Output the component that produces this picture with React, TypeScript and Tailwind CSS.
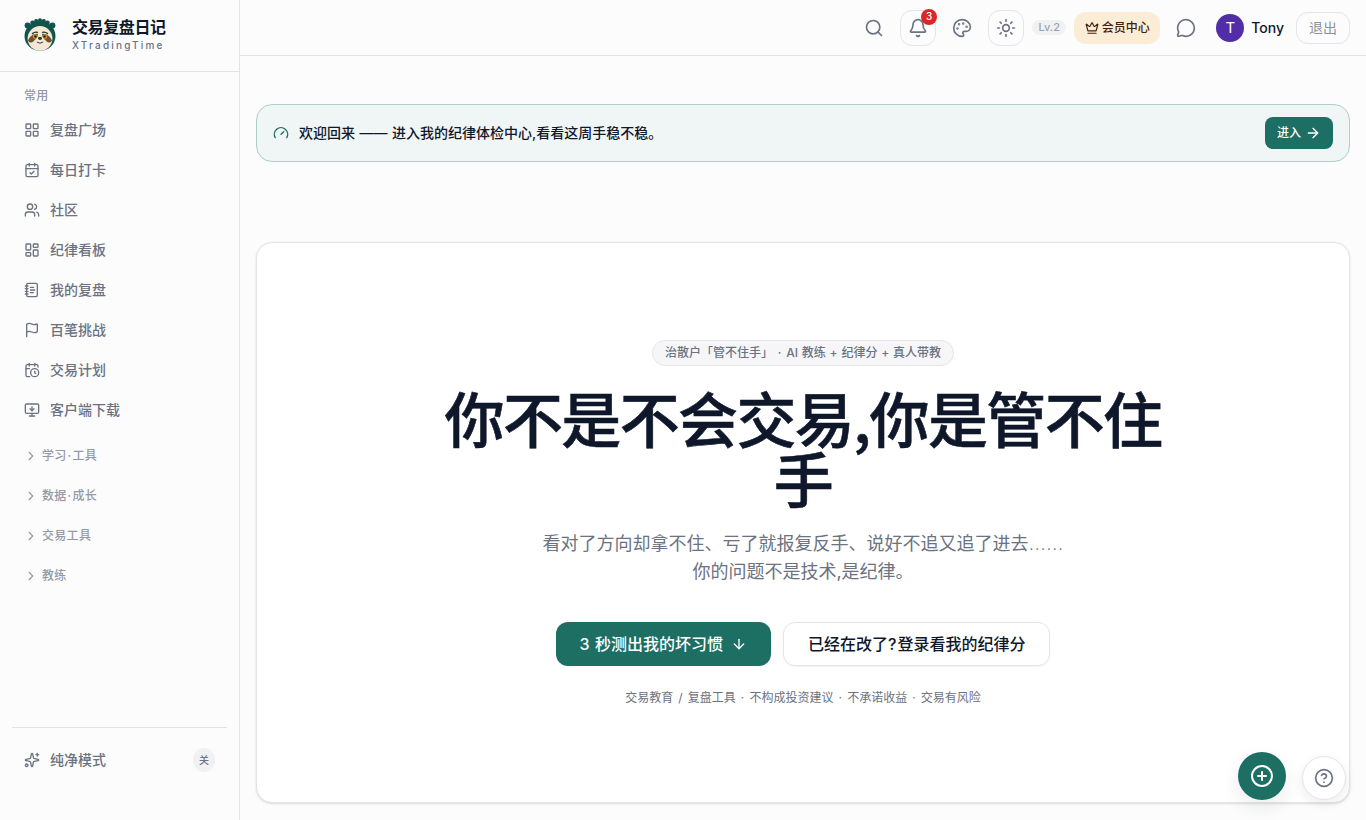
import React from "react";
import {
  ArrowDown, ArrowRight, Bell, CalendarCheck, CalendarClock, ChevronRight, CircleHelp, CirclePlus, Crown, Flag,
  Gauge, LayoutDashboard, LayoutGrid, MessageCircle, MonitorDown, NotebookText, Palette, Search, Sparkles, Sun, Users,
} from "lucide-react";

const nav = [
  { label: "复盘广场", Icon: LayoutGrid },
  { label: "每日打卡", Icon: CalendarCheck },
  { label: "社区", Icon: Users },
  { label: "纪律看板", Icon: LayoutDashboard },
  { label: "我的复盘", Icon: NotebookText },
  { label: "百笔挑战", Icon: Flag },
  { label: "交易计划", Icon: CalendarClock },
  { label: "客户端下载", Icon: MonitorDown },
];

const groups = [["学习", "工具"], ["数据", "成长"], ["交易工具"], ["教练"]];

function SlothLogo() {
  return (
    <svg width="32" height="34" viewBox="0 0 32 34" className="-mt-0.5 shrink-0">
      <g fill="#12544b">
        <circle cx="3.6" cy="7.6" r="3" />
        <circle cx="28.4" cy="7.6" r="3" />
        <circle cx="8.6" cy="4.8" r="2.4" />
        <circle cx="12.2" cy="3" r="2.1" />
        <circle cx="16" cy="2.2" r="2" />
        <circle cx="19.8" cy="3" r="2.1" />
        <circle cx="23.4" cy="4.8" r="2.4" />
        <ellipse cx="16" cy="18" rx="15.5" ry="15" />
      </g>
      <ellipse cx="16" cy="20.4" rx="12.4" ry="12.4" fill="#f2e8d5" />
      <path d="M14 16C10 15 6 18 4 22.500c1 2.600 3.600 2.400 5.800.4C12 21 14 19 14 16Z" fill="#73512f" />
      <path d="M18 16c4-1 8 2 10 6.500-1 2.600-3.600 2.400-5.800.4C20 21 18 19 18 16Z" fill="#73512f" />
      <path d="M8.500 15.600q2.300-2 5-1.200M23.500 15.600q-2.300-2-5-1.200" stroke="#1b3a35" strokeWidth="1.300" fill="none" strokeLinecap="round" />
      <circle cx="11.200" cy="18.600" r="2.400" fill="#e0912f" />
      <circle cx="20.800" cy="18.600" r="2.400" fill="#e0912f" />
      <circle cx="11.500" cy="18.500" r="1.300" fill="#1b2420" />
      <circle cx="20.500" cy="18.500" r="1.300" fill="#1b2420" />
      <ellipse cx="16" cy="20.300" rx="2" ry="1.600" fill="#123f3a" />
      <path d="M13.200 24.300q2.800 2 5.600 0" stroke="#34463f" strokeWidth="1" fill="none" strokeLinecap="round" />
    </svg>
  );
}

function Sidebar() {
  return (
    <aside className="flex w-60 shrink-0 flex-col border-r border-[#e4e4e7] bg-[#fcfcfd]">
      <div className="flex h-[72px] items-center gap-4 border-b border-[#e4e4e7] px-6">
        <SlothLogo />
        <div className="flex flex-col pb-0.5">
          <span className="text-base leading-5 font-semibold tracking-[-0.025em] text-[#0f172a]">交易复盘日记</span>
          <span className="text-[10px] leading-4 font-medium tracking-[0.22em] text-[#6b7280]">XTradingTime</span>
        </div>
      </div>
      <nav className="flex flex-1 flex-col px-3 pt-4">
        <div className="mb-2 px-3 text-xs leading-4 font-medium tracking-wide text-[#9499a5]">常用</div>
        <div className="flex flex-col gap-1">
          {nav.map(({ label, Icon }) => (
            <a key={label} className="flex h-9 items-center gap-2.5 px-3 text-sm font-medium text-[#6b7280]">
              <Icon size={16} />
              {label}
            </a>
          ))}
        </div>
        <div className="mt-3 flex flex-col gap-2">
          {groups.map(([first, second]) => (
            <button key={first} className="flex h-8 items-center gap-1 px-3 text-xs font-medium tracking-wide text-[#9499a5]">
              <ChevronRight size={14} />
              <span>
                {first}
                {second && <span className="mx-px">·</span>}
                {second}
              </span>
            </button>
          ))}
        </div>
      </nav>
      <div className="mx-3 h-[93px] border-t border-[#e4e4e7] pt-3">
        <div className="flex h-10 items-center gap-2.5 px-3 text-sm font-medium text-[#6b7280]">
          <Sparkles size={16} />
          纯净模式
          <span className="ml-auto flex h-6 w-[22px] items-center justify-center rounded-full bg-[#f1f1f4] text-[10px]">关</span>
        </div>
      </div>
    </aside>
  );
}

function Header() {
  return (
    <header className="flex h-14 shrink-0 items-center justify-end border-b border-[#e4e4e7] bg-[#fcfcfd] pr-4 text-[#6b7280]">
      <div className="flex size-9 items-center justify-center"><Search size={20} /></div>
      <div className="relative ml-2 flex size-9 items-center justify-center rounded-xl border border-[#e4e4ec]">
        <Bell size={20} />
        <span className="absolute -top-0.5 -right-[2px] flex size-4 items-center justify-center rounded-full bg-[#dc2626] text-[10px] font-medium text-white">3</span>
      </div>
      <div className="ml-2 flex size-9 items-center justify-center"><Palette size={20} /></div>
      <div className="ml-2 flex size-9 items-center justify-center rounded-xl border border-[#e4e4ec]"><Sun size={20} /></div>
      <span className="ml-2 flex h-[15px] w-[34px] items-center justify-center rounded-full bg-[#f0f1f3] text-[11px] font-medium text-[#9ca3af]">Lv.2</span>
      <div className="ml-2 flex h-8 w-[86px] items-center justify-center gap-[3px] rounded-xl bg-[#fbecd6] text-xs font-medium text-[#43210b]">
        <Crown size={14} />
        会员中心
      </div>
      <div className="ml-2 flex size-9 items-center justify-center"><MessageCircle size={20} /></div>
      <span className="ml-3 flex size-7 items-center justify-center rounded-full bg-[#512da8] text-[15px] leading-none text-white">T</span>
      <span className="ml-[7px] text-sm font-medium text-[#0f172a]">Tony</span>
      <button className="ml-3 flex h-8 w-[54px] items-center justify-center rounded-xl border border-[#e4e4ec] text-sm text-[#6b7280]/80">退出</button>
    </header>
  );
}

function Hero() {
  return (
    <section className="mt-20 flex h-[561px] shrink-0 flex-col items-center rounded-2xl border border-[#e4e4e7] bg-white pt-[97px] shadow-sm">
      <span className="flex h-[26px] items-center rounded-full border border-[#e4e4ec] bg-[#f6f6f9] px-3 text-xs font-medium text-[#6b7280]">
        <span className="[word-spacing:0.6px]">
          治散户「管不住手」 <span className="mx-px">·</span> AI 教练 + 纪律分 + 真人带教
        </span>
      </span>
      <h1 className="mt-[21px] h-[120px] w-[768px] text-center font-['Noto_Sans_CJK_SC',sans-serif] text-6xl leading-none font-medium tracking-[-0.027em] text-[#0f172a] [-webkit-text-stroke:0.6px_#0f172a]">
        你不是不会交易,你是管不住手
      </h1>
      <p className="mt-[23px] text-center text-lg leading-7 text-[#6b7280]">
        看对了方向却拿不住、亏了就报复反手、说好不追又追了进去<span className="text-[21px] leading-none font-extralight">……</span>
        <br />
        你的问题不是技术,是纪律。
      </p>
      <div className="mt-9 flex gap-3">
        <button className="flex h-11 items-center gap-2 rounded-xl bg-[#1d6f63] px-6 text-base font-medium text-white [word-spacing:1px]">
          3 秒测出我的坏习惯
          <ArrowDown size={16} />
        </button>
        <button className="flex h-11 items-center rounded-xl border border-[#e4e4ec] bg-white px-6 text-base font-medium text-[#0f172a] shadow-xs">
          已经在改了?<span className="ml-px">登录看我的纪律分</span>
        </button>
      </div>
      <p className="mt-6 text-xs leading-4 text-[#6b7280] [word-spacing:1.75px]">交易教育 / 复盘工具 · 不构成投资建议 · 不承诺收益 · 交易有风险</p>
    </section>
  );
}

export default function App() {
  return (
    <div className="relative flex h-[820px] w-[1366px] overflow-hidden bg-[#fcfcfc] font-['Inter','Noto_Sans_CJK_SC',sans-serif]">
      <Sidebar />
      <div className="flex min-w-0 flex-1 flex-col">
        <Header />
        <main className="flex flex-1 flex-col px-4 pt-12">
          <div className="flex h-[58px] shrink-0 items-center rounded-2xl border border-[#abcfc9] bg-[#f0f5f5] px-4 text-sm font-medium text-[#0f172a]">
            <Gauge size={16} className="mr-2.5 text-[#1d6f63]" />
            <span className="[word-spacing:0.8px]">欢迎回来 —— 进入我的纪律体检中心,看看这周手稳不稳。</span>
            <button className="ml-auto flex h-8 items-center gap-1 rounded-lg bg-[#1d6f63] px-3 text-xs text-white">
              进入
              <ArrowRight size={16} />
            </button>
          </div>
          <Hero />
        </main>
      </div>
      <div className="absolute right-5 bottom-5 flex items-end gap-4">
        <button className="flex size-12 items-center justify-center rounded-full bg-[#1d6f63] text-white shadow-[0_8px_20px_rgba(15,23,42,0.08)]"><CirclePlus size={24} /></button>
        <button className="flex size-11 items-center justify-center rounded-full border border-[#e4e4ec] bg-white text-[#6b7280] shadow-[0_4px_12px_rgba(15,23,42,0.08)]"><CircleHelp size={20} /></button>
      </div>
    </div>
  );
}
